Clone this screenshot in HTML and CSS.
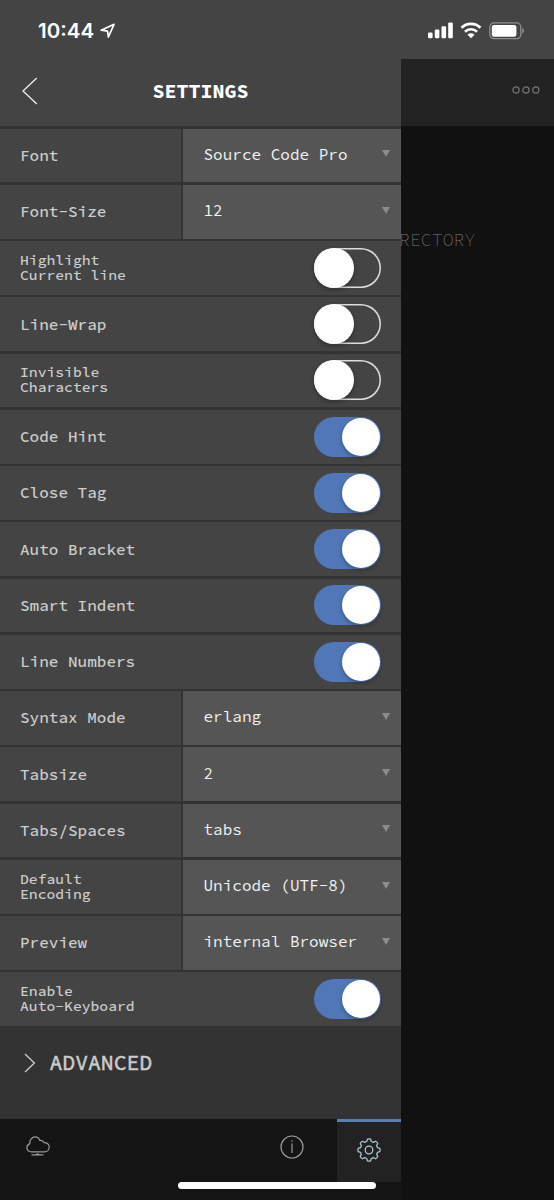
FILE: index.html
```html
<!DOCTYPE html>
<html lang="en">
  <head>
    <meta charset="UTF-8" />
    <meta name="viewport" content="width=device-width, initial-scale=1.0" />
    <title>Settings</title>
    <link rel="stylesheet" href="styles.css">
  </head>
  <body>
    <div class="status-bar">
      <span class="time">10:44</span>
      <svg class="location" width="16" height="16" viewBox="0 0 16 16">
        <path d="M1.2 7.2 14 1.3 8.4 14 7.5 8.1Z" />
      </svg>
      <svg class="signal" width="26" height="17" viewBox="0 0 26 17">
        <rect x="0" y="10.5" width="4.6" height="5.8" rx="1.2" />
        <rect x="6.8" y="7.6" width="4.6" height="8.7" rx="1.2" />
        <rect x="13.5" y="4.3" width="4.6" height="12" rx="1.2" />
        <rect x="20.2" y="0.4" width="4.6" height="15.9" rx="1.2" />
      </svg>
      <svg class="wifi" width="22" height="17" viewBox="0 0 22 17">
        <path class="arc" d="M1.5 5.8a13.6 13.6 0 0 1 19 0M5 9.7a8.6 8.6 0 0 1 12 0" />
        <path d="M11 16.2 7.5 12.7a5 5 0 0 1 7 0Z" />
      </svg>
      <svg class="battery" width="36" height="18" viewBox="0 0 36 18">
        <rect class="shell" x="0.8" y="0.9" width="31" height="15.8" rx="4.2" />
        <rect x="2.8" y="2.9" width="24.6" height="11.8" rx="2.3" />
        <path class="cap" d="M33.2 6v5.6c2.4-1 2.4-4.6 0-5.6Z" />
      </svg>
    </div>

    <div class="screen">
      <div class="panel">
        <div class="header">
          <svg class="back" width="16" height="28" viewBox="0 0 16 28">
            <path d="M14.8 1 1 14 14.8 27" />
          </svg>
          <h1>SETTINGS</h1>
        </div>

        <div class="settings">
          <div class="row">
            <div class="label">Font</div>
            <div class="select">Source Code Pro</div>
          </div>
          <div class="row">
            <div class="label">Font-Size</div>
            <div class="select">12</div>
          </div>
          <div class="row">
            <div class="label small">Highlight<br>Current line</div>
            <div class="toggle"></div>
          </div>
          <div class="row">
            <div class="label">Line-Wrap</div>
            <div class="toggle"></div>
          </div>
          <div class="row">
            <div class="label small">Invisible<br>Characters</div>
            <div class="toggle"></div>
          </div>
          <div class="row">
            <div class="label">Code Hint</div>
            <div class="toggle on"></div>
          </div>
          <div class="row">
            <div class="label">Close Tag</div>
            <div class="toggle on"></div>
          </div>
          <div class="row">
            <div class="label">Auto Bracket</div>
            <div class="toggle on"></div>
          </div>
          <div class="row">
            <div class="label">Smart Indent</div>
            <div class="toggle on"></div>
          </div>
          <div class="row">
            <div class="label">Line Numbers</div>
            <div class="toggle on"></div>
          </div>
          <div class="row">
            <div class="label">Syntax Mode</div>
            <div class="select">erlang</div>
          </div>
          <div class="row">
            <div class="label">Tabsize</div>
            <div class="select">2</div>
          </div>
          <div class="row">
            <div class="label">Tabs/Spaces</div>
            <div class="select">tabs</div>
          </div>
          <div class="row">
            <div class="label small">Default<br>Encoding</div>
            <div class="select">Unicode (UTF-8)</div>
          </div>
          <div class="row">
            <div class="label">Preview</div>
            <div class="select">internal Browser</div>
          </div>
          <div class="row">
            <div class="label small">Enable<br>Auto-Keyboard</div>
            <div class="toggle on"></div>
          </div>
        </div>

        <div class="advanced">
          <svg width="12" height="20" viewBox="0 0 12 20">
            <path d="M1 1 10.4 10 1 19" />
          </svg>
          <span>ADVANCED</span>
        </div>

        <div class="tabs">
          <div class="tab cloud">
            <svg width="24" height="21" viewBox="0 0 24 21">
              <path d="M5.2 15.8C2.8 15.8.9 13.9.9 11.5c0-2 1.3-3.2 2.9-3.9C3.4 3.8 6 .9 9 .9c2.5 0 4.2 1.5 4.9 3.6 1.9-.4 3.4.6 4.1 2.1 2.9-.1 5.2 1.7 5.2 4.6 0 2.7-2 4.6-4.6 4.6Z" />
              <path d="M5.5 18.9h12M9.5 18.5h4M11.5 17.3v1.5" />
            </svg>
          </div>
          <div class="tab info">
            <svg width="24" height="24" viewBox="0 0 24 24">
              <circle cx="12" cy="12" r="11" />
              <path d="M12 8.5v9.5M12 5.2v1.6" />
            </svg>
          </div>
          <div class="tab active">
            <svg width="24" height="24" viewBox="0 0 24 24">
              <path d="M9.7 3.5 10.4 1.2Q12 .6 13.6 1.2L14.3 3.5 16.4 4.4 18.5 3.2Q20 4 20.8 5.5L19.6 7.6 20.5 9.7 22.8 10.4Q23.4 12 22.8 13.6L20.5 14.3 19.6 16.4 20.8 18.5Q20 20 18.5 20.8L16.4 19.6 14.3 20.5 13.6 22.8Q12 23.4 10.4 22.8L9.7 20.5 7.6 19.6 5.5 20.8Q4 20 3.2 18.5L4.4 16.4 3.5 14.3 1.2 13.6Q.6 12 1.2 10.4L3.5 9.7 4.4 7.6 3.2 5.5Q4 4 5.5 3.2L7.6 4.4Z" />
              <circle cx="12" cy="12" r="3.8" />
            </svg>
          </div>
        </div>
      </div>

      <div class="behind">
        <div class="toolbar">
          <svg width="28" height="8" viewBox="0 0 28 8">
            <circle cx="4" cy="4" r="3.1" />
            <circle cx="14" cy="4" r="3.1" />
            <circle cx="23.8" cy="4" r="3.1" />
          </svg>
        </div>
        <p class="directory">RECTORY</p>
      </div>
    </div>

    <div class="home-indicator"></div>
  </body>
</html>
```

FILE: styles.css
```css
* {
  margin: 0;
  padding: 0;
  box-sizing: border-box;
}

body {
  width: 554px;
  height: 1200px;
  overflow: hidden;
  position: relative;
  background: #111;
  color: #ccc;
  font-family: "Source Code Pro", "DejaVu Sans Mono", monospace;
}

svg {
  display: block;
  flex: none;
  fill: none;
}

/* Status bar */
.status-bar {
  height: 59px;
  padding: 2px 29px 0 38px;
  display: flex;
  align-items: center;
  background: #444;
  color: white;
}

.status-bar svg {
  fill: white;
}

.time {
  width: 62px;
  font-family: Inter, sans-serif;
  font-size: 20.5px;
  font-weight: 600;
}

.status-bar .location {
  fill: none;
  stroke: white;
  stroke-width: 1.7;
  stroke-linejoin: round;
}

.signal {
  margin-left: auto;
}

.wifi {
  margin: 0 7px 0 6px;
}

.wifi .arc {
  fill: none;
  stroke: white;
  stroke-width: 2.7;
}

.battery .shell {
  fill: none;
  stroke: #8d8d8d;
  stroke-width: 1.3;
}

.battery .cap {
  fill: #8d8d8d;
}

/* Settings panel */
.screen {
  display: flex;
  height: 1141px;
}

.panel {
  width: 401px;
  display: flex;
  flex-direction: column;
  background: #333;
}

.header {
  height: 67px;
  padding: 0 0 3px 22px;
  display: flex;
  align-items: center;
  background: #444;
}

.header h1 {
  flex: 1;
  padding-right: 38px;
  color: white;
  font-size: 20px;
  line-height: 26px;
  text-align: center;
}

.back path {
  stroke: #eee;
  stroke-width: 1.3;
}

.settings {
  display: grid;
  grid-template-rows: repeat(16, 53.75px);
  row-gap: 2.5px;
  padding-top: 2.5px;
}

.row {
  display: flex;
  align-items: center;
  background: #444;
}

.label {
  width: 181px;
  padding: 0 0 1px 20px;
  font-size: 16px;
  font-weight: 500;
}

.label.small {
  padding-bottom: 0;
  font-size: 14.7px;
  line-height: 15px;
}

.select {
  flex: 1;
  height: 100%;
  padding: 0 11px 3px 20.5px;
  display: flex;
  align-items: center;
  justify-content: space-between;
  border-left: 2px solid #333;
  background: #555;
  color: #f2f2f2;
  font-size: 16px;
  white-space: nowrap;
}

.select::after {
  content: "";
  border: 4.5px solid transparent;
  border-top: 7px solid #8c8c8c;
  border-bottom: 0;
}

.toggle {
  width: 67px;
  height: 40px;
  margin: 0 20px 0 auto;
  border-radius: 20px;
  box-shadow: inset 0 0 0 1.5px #ddd;
}

.toggle::before {
  content: "";
  display: block;
  width: 40px;
  height: 40px;
  border-radius: 50%;
  background: white;
  box-shadow: 0 2px 4px rgba(0, 0, 0, 0.3);
}

.toggle.on {
  padding: 1px 0 0 28px;
  background: #5177b9;
  box-shadow: none;
}

.toggle.on::before {
  width: 38px;
  height: 38px;
}

.advanced {
  flex: 1;
  padding: 27px 0 0 24px;
  display: flex;
  align-items: flex-start;
  gap: 13.5px;
  font-size: 21.4px;
  line-height: 20px;
  -webkit-text-stroke: 0.5px #ccc;
}

.advanced path {
  stroke: #ccc;
  stroke-width: 1.3;
}

/* Bottom tabs */
.tabs {
  height: 81px;
  padding-bottom: 18px;
  display: flex;
  background: #141414;
}

.tab {
  display: flex;
  align-items: center;
  justify-content: center;
}

.tab svg {
  stroke: #9a9a9a;
  stroke-width: 1.2;
}

.cloud {
  width: 76px;
  padding-bottom: 8px;
}

.info {
  width: 90px;
  margin-left: auto;
  padding-bottom: 7px;
}

.tab.active {
  width: 64px;
  border-top: 3px solid #5a7ebc;
  padding-bottom: 4px;
  background: #222;
}

.tab.active svg {
  stroke: #a9c4cc;
  stroke-width: 1.3;
  stroke-linejoin: round;
}

/* Page behind the panel */
.behind {
  flex: 1;
  background: #111;
}

.toolbar {
  height: 67px;
  padding: 0 14px 5px 0;
  display: flex;
  align-items: center;
  justify-content: flex-end;
  background: #222;
}

.toolbar circle {
  stroke: #777;
  stroke-width: 1.2;
}

.directory {
  margin: 101px 0 0 -2px;
  color: #7c7c7c;
  font-size: 18.2px;
  font-weight: 200;
  line-height: 26px;
}

.home-indicator {
  position: absolute;
  left: 178px;
  bottom: 11px;
  width: 198px;
  height: 7px;
  border-radius: 4px;
  background: white;
}
```
